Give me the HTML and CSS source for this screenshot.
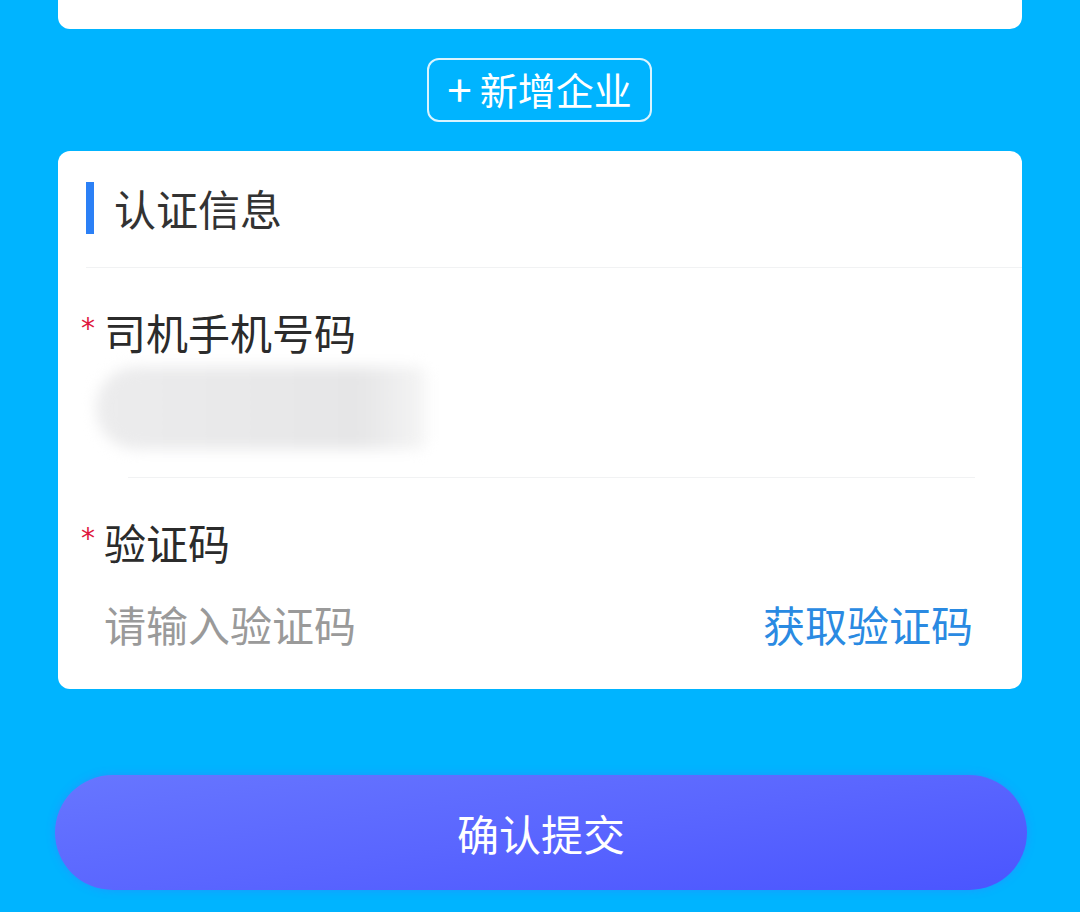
FILE: index.html
```html
<!DOCTYPE html>
<html lang="zh-CN">
<head>
<meta charset="utf-8">
<title>认证信息</title>
<link rel="stylesheet" href="styles.css">
</head>
<body>
<div class="page">
  <div class="card card-top"></div>
  <div class="add-wrap">
    <div class="add-btn"><span class="plus">+</span>新增企业</div>
  </div>
  <div class="card card-auth">
    <div class="title-row">
      <span class="title-bar"></span>
      <span class="title-text">认证信息</span>
    </div>
    <div class="divider divider-top"></div>
    <div class="label"><span class="star">*</span><span>司机手机号码</span></div>
    <div class="phone-blur"><div class="blur-block"></div></div>
    <div class="divider divider-mid"></div>
    <div class="label label-code"><span class="star">*</span><span>验证码</span></div>
    <div class="code-row">
      <span class="placeholder">请输入验证码</span>
      <span class="get-code">获取验证码</span>
    </div>
  </div>
  <div class="submit-wrap">
    <div class="submit-btn">确认提交</div>
  </div>
</div>
</body>
</html>
```

FILE: styles.css
```css
html, body {
  margin: 0;
  padding: 0;
}
body {
  background: #00b4ff;
  font-family: "Noto Sans CJK SC", "Noto Sans", sans-serif;
  width: 1080px;
  height: 912px;
  overflow: hidden;
}
.page {
  display: flex;
  flex-direction: column;
}
.card {
  background: #ffffff;
  margin: 0 58px;
  border-radius: 12px;
}
.card-top {
  height: 29px;
  border-radius: 0 0 12px 12px;
}
.add-wrap {
  display: flex;
  justify-content: center;
  margin-top: 29px;
}
.add-btn {
  box-sizing: border-box;
  width: 225px;
  height: 64px;
  border: 2px solid rgba(255, 255, 255, 0.85);
  border-radius: 12px;
  color: #ffffff;
  font-size: 38px;
  line-height: 58px;
  display: flex;
  justify-content: center;
  margin-left: -1px;
}
.plus {
  margin-right: 8px;
  font-size: 44px;
  line-height: 56px;
}
.card-auth {
  margin-top: 29px;
  height: 538px;
  display: flex;
  flex-direction: column;
}
.title-row {
  display: flex;
  align-items: center;
  margin: 31px 0 0 28px;
  height: 52px;
}
.title-bar {
  width: 8px;
  height: 52px;
  background: #2b80f6;
}
.title-text {
  margin-left: 20px;
  font-size: 42px;
  line-height: 52px;
  color: #333333;
}
.divider {
  height: 1px;
  background: #f1f2f3;
}
.divider-top {
  margin: 33px 0 0 28px;
}
.label {
  display: flex;
  align-items: flex-start;
  margin: 40px 0 0 23px;
  height: 48px;
  font-size: 42px;
  line-height: 48px;
  color: #2b2b2b;
}
.star {
  color: #e0163f;
  font-size: 28px;
  line-height: 28px;
  width: 23px;
  margin-top: 7px;
  font-family: "DejaVu Sans", sans-serif;
}
.phone-blur {
  margin: 11px 0 0 38px;
  height: 82px;
  display: flex;
}
.blur-block {
  width: 330px;
  height: 82px;
  background: linear-gradient(90deg, #ececed 0%, #e6e6e7 80%, #f5f5f5 100%);
  border-radius: 40px 8px 8px 40px;
  filter: blur(7px);
}
.divider-mid {
  margin: 28px 47px 0 70px;
}
.label-code {
  margin-top: 40px;
}
.code-row {
  display: flex;
  justify-content: space-between;
  align-items: center;
  height: 60px;
  margin: 28px 49px 0 46px;
  font-size: 42px;
  line-height: 60px;
}
.placeholder {
  color: #9a9a9a;
}
.get-code {
  color: #2a8ae2;
}
.submit-wrap {
  display: flex;
  justify-content: center;
  margin-top: 86px;
}
.submit-btn {
  width: 972px;
  height: 115px;
  margin-left: 2px;
  border-radius: 58px;
  background: linear-gradient(172deg, #6776ff 0%, #5a66ff 50%, #4a55ff 100%);
  box-shadow: 0 0 8px rgba(90, 100, 255, 0.35);
  color: #ffffff;
  font-size: 42px;
  line-height: 115px;
  text-align: center;
}
```
